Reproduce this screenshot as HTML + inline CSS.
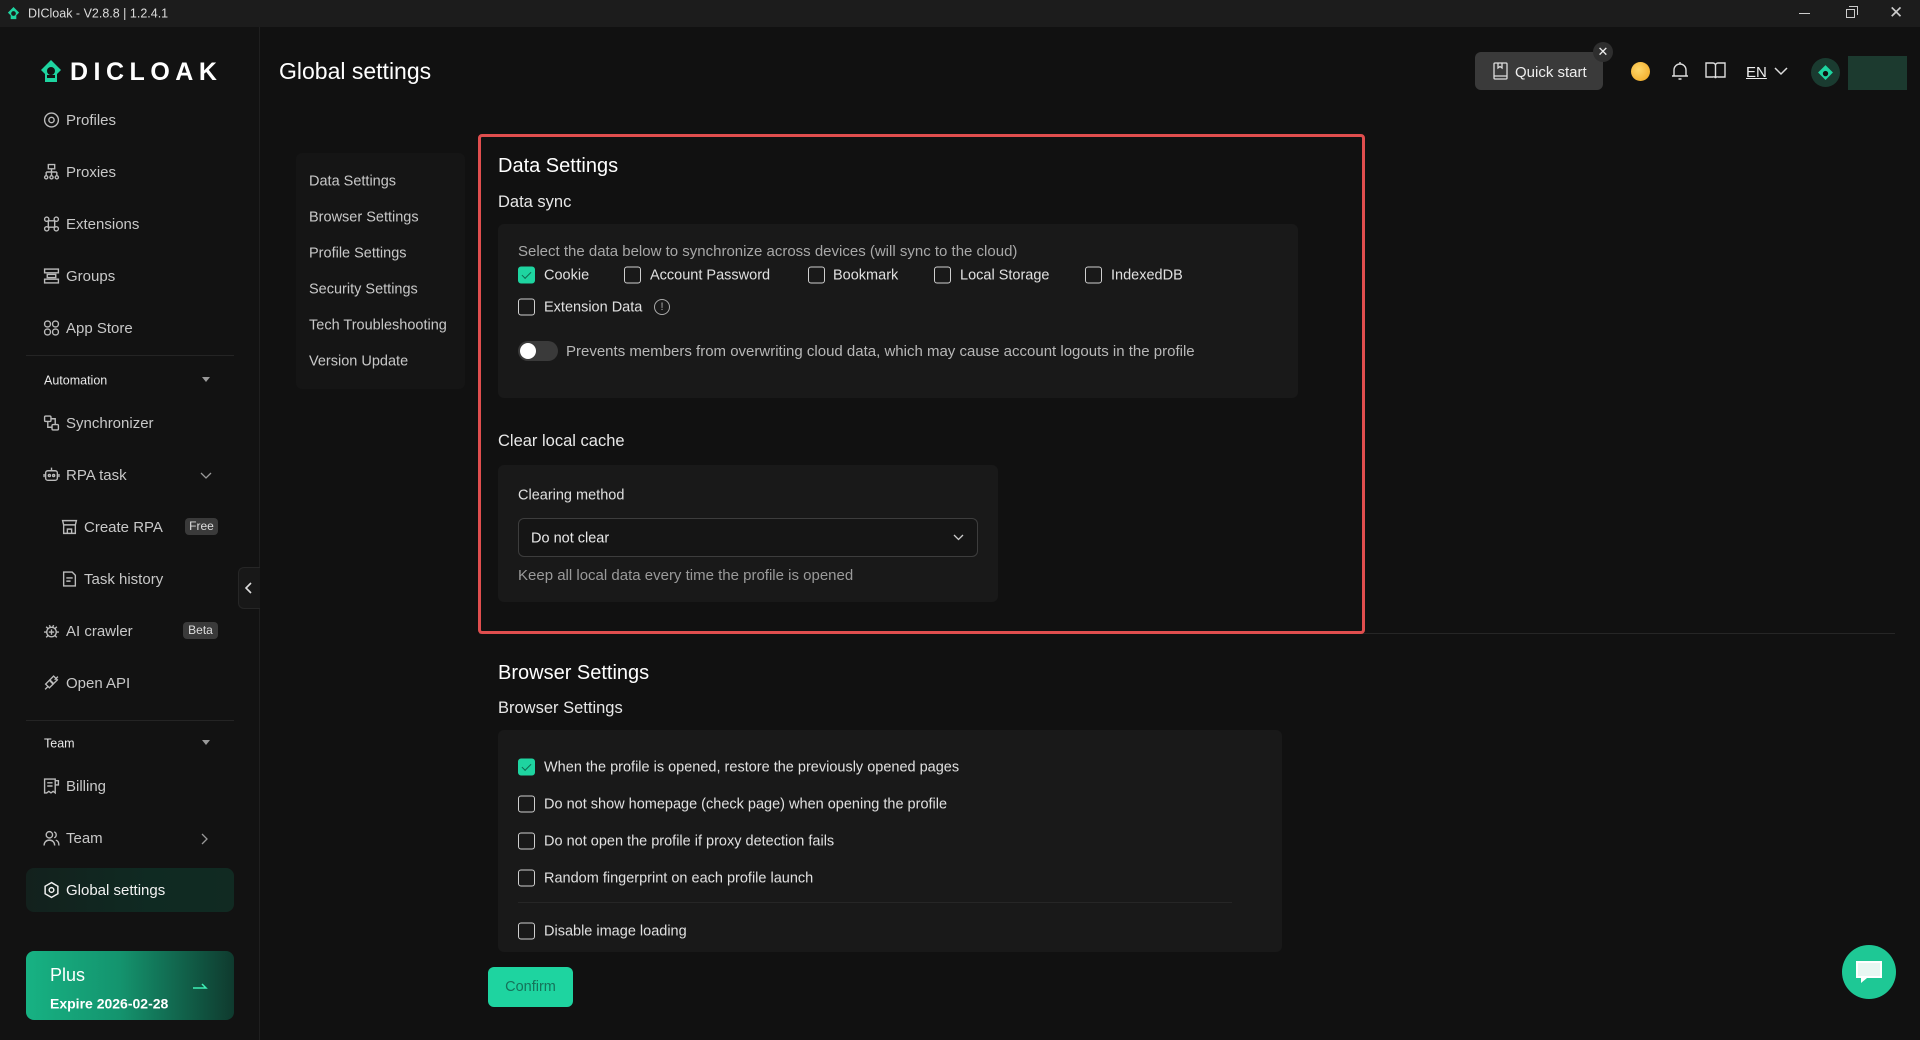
<!DOCTYPE html>
<html><head><meta charset="utf-8">
<style>
*{margin:0;padding:0;box-sizing:border-box}
body{width:1920px;height:1040px;background:#111111;font-family:"Liberation Sans",sans-serif;color:#e6e6e6;position:relative;overflow:hidden}
.a{position:absolute}
.t{position:absolute;white-space:nowrap;transform:translateY(calc(-50% + 2px));line-height:1.2}
.nav{font-size:15px;color:#c8c8c8}
.ic{position:absolute;transform:translateY(calc(-50% + 1px))}
.cb{position:absolute;width:17px;height:17px;border:1.4px solid #cfcfcf;border-radius:3px;transform:translateY(calc(-50% + 1px))}
.cb.on{background:#1ed4a0;border-color:#1ed4a0}
.cb.on:after{content:"";position:absolute;left:5px;top:2px;width:4px;height:8px;border:solid #0d6b50;border-width:0 1.5px 1.5px 0;transform:rotate(45deg)}
.lbl{font-size:14.5px;color:#e0e0e0}
.panel{position:absolute;background:#191919;border-radius:6px}
.badge{position:absolute;background:#3a3a3a;color:#ddd;font-size:12px;border-radius:4px;text-align:center;line-height:17px;height:17px}
</style></head><body>
<!-- title bar -->
<div class="a" style="left:0;top:0;width:1920px;height:27px;background:#1c1c1c"></div>
<svg class="a" style="left:6px;top:6px" width="15" height="15" viewBox="0 0 16 16"><path d="M8 1 L14 7 L11 10 L11 14 L5 14 L5 10 L2 7 Z" fill="#1ed4a0"/><circle cx="8" cy="8" r="2.5" fill="#1c1c1c"/></svg>
<div class="t" style="left:28px;top:12px;font-size:12.5px;color:#ddd">DICloak - V2.8.8 | 1.2.4.1</div>
<div class="a" style="left:1799px;top:13px;width:11px;height:1px;background:#ccc"></div>
<div class="a" style="left:1846px;top:9px;width:9px;height:9px;border:1px solid #ccc"></div>
<div class="a" style="left:1849px;top:6px;width:9px;height:9px;border-top:1px solid #ccc;border-right:1px solid #ccc"></div>
<div class="t" style="left:1889px;top:11px;font-size:17px;color:#ccc">✕</div>

<!-- sidebar -->
<div class="a" style="left:0;top:27px;width:260px;height:1013px;background:#121212;border-right:1px solid #1f1f1f"></div>
<svg class="a" style="left:39px;top:59px" width="24" height="24" viewBox="0 0 24 24"><path d="M12 1 L22 11 L18 15 L18 23 L6 23 L6 15 L2 11 Z" fill="#1ed4a0"/><circle cx="12" cy="12" r="4" fill="#121212"/><rect x="8" y="16" width="8" height="3" fill="#121212"/></svg>
<div class="t" style="left:70px;top:70px;font-size:25px;font-weight:bold;color:#fff;letter-spacing:5.5px">DICLOAK</div>

<div class="nav">
<svg class="ic" style="left:43px;top:119px" width="17" height="17" viewBox="0 0 16 16" fill="none" stroke="#bbb" stroke-width="1.3"><circle cx="8" cy="8" r="6.5"/><circle cx="8" cy="8" r="2.5"/></svg><div class="t" style="left:66px;top:119px">Profiles</div>
<svg class="ic" style="left:43px;top:171px" width="17" height="17" viewBox="0 0 16 16" fill="none" stroke="#bbb" stroke-width="1.3"><rect x="5" y="1" width="6" height="4"/><path d="M8 5v3M3 8h10M3 8v3M8 8v3M13 8v3"/><circle cx="3" cy="13" r="1.5"/><circle cx="8" cy="13" r="1.5"/><circle cx="13" cy="13" r="1.5"/></svg><div class="t" style="left:66px;top:171px">Proxies</div>
<svg class="ic" style="left:43px;top:223px" width="17" height="17" viewBox="0 0 16 16" fill="none" stroke="#bbb" stroke-width="1.3"><path d="M5 5h6v6H5z"/><circle cx="3.5" cy="3.5" r="2"/><circle cx="12.5" cy="3.5" r="2"/><circle cx="3.5" cy="12.5" r="2"/><circle cx="12.5" cy="12.5" r="2"/></svg><div class="t" style="left:66px;top:223px">Extensions</div>
<svg class="ic" style="left:43px;top:275px" width="17" height="17" viewBox="0 0 16 16" fill="none" stroke="#bbb" stroke-width="1.3"><rect x="1.5" y="1.5" width="13" height="3.5"/><rect x="4" y="6.5" width="8" height="3"/><rect x="1.5" y="11" width="13" height="3.5"/></svg><div class="t" style="left:66px;top:275px">Groups</div>
<svg class="ic" style="left:43px;top:327px" width="17" height="17" viewBox="0 0 16 16" fill="none" stroke="#bbb" stroke-width="1.3"><rect x="1.5" y="1.5" width="5.5" height="5.5" rx="2.5"/><rect x="9" y="1.5" width="5.5" height="5.5" rx="2.5"/><rect x="1.5" y="9" width="5.5" height="5.5" rx="2.5"/><rect x="9" y="9" width="5.5" height="5.5" rx="2.5"/></svg><div class="t" style="left:66px;top:327px">App Store</div>

<div class="a" style="left:26px;top:355px;width:208px;height:1px;background:#242424"></div>
<div class="t" style="left:44px;top:379px;font-size:12.5px;color:#e8e8e8">Automation</div>
<div class="a" style="left:202px;top:377px;border-left:4.5px solid transparent;border-right:4.5px solid transparent;border-top:5px solid #999"></div>

<svg class="ic" style="left:43px;top:422px" width="17" height="17" viewBox="0 0 16 16" fill="none" stroke="#bbb" stroke-width="1.3"><rect x="1.5" y="1.5" width="6" height="5" rx="1"/><rect x="8.5" y="9.5" width="6" height="5" rx="1"/><path d="M4.5 7v5h4M11.5 9V4h-4"/></svg><div class="t" style="left:66px;top:422px">Synchronizer</div>
<svg class="ic" style="left:43px;top:474px" width="17" height="17" viewBox="0 0 16 16" fill="none" stroke="#bbb" stroke-width="1.3"><rect x="2.5" y="4" width="11" height="9" rx="2"/><path d="M8 1v3M1 7v3M15 7v3"/><circle cx="6" cy="8.5" r="1"/><circle cx="10" cy="8.5" r="1"/></svg><div class="t" style="left:66px;top:474px">RPA task</div>
<svg class="a" style="left:200px;top:472px" width="12" height="8" viewBox="0 0 12 8" fill="none" stroke="#999" stroke-width="1.3"><path d="M1 1l5 5 5-5"/></svg>
<svg class="ic" style="left:61px;top:526px" width="17" height="17" viewBox="0 0 16 16" fill="none" stroke="#bbb" stroke-width="1.3"><path d="M1.5 2h13l-1 4h-11z"/><path d="M2.5 6v8h11V6M6 14v-4h4v4"/></svg><div class="t" style="left:84px;top:526px">Create RPA</div>
<div class="badge" style="left:185px;top:518px;width:33px">Free</div>
<svg class="ic" style="left:61px;top:578px" width="17" height="17" viewBox="0 0 16 16" fill="none" stroke="#bbb" stroke-width="1.3"><path d="M2.5 1.5h8l3 3v10h-11z M5 7h6M5 10h4"/></svg><div class="t" style="left:84px;top:578px">Task history</div>
<svg class="ic" style="left:43px;top:630px" width="17" height="17" viewBox="0 0 16 16" fill="none" stroke="#bbb" stroke-width="1.3"><circle cx="8" cy="9" r="4.5"/><path d="M8 6.5v5M5.5 9h5M1 9h2.5M12.5 9H15M3 4l2 2M13 4l-2 2M3 14l2-2M13 14l-2-2M6 2.5l1 2M10 2.5l-1 2"/></svg><div class="t" style="left:66px;top:630px">AI crawler</div>
<div class="badge" style="left:183px;top:622px;width:35px">Beta</div>
<svg class="ic" style="left:43px;top:682px" width="17" height="17" viewBox="0 0 16 16" fill="none" stroke="#bbb" stroke-width="1.3"><path d="M2 14l3-3M14 2l-3 3"/><rect x="3.5" y="6.5" width="5" height="5" transform="rotate(45 6 9)"/><rect x="7.5" y="2.5" width="5" height="5" transform="rotate(45 10 5)"/></svg><div class="t" style="left:66px;top:682px">Open API</div>

<div class="a" style="left:26px;top:720px;width:208px;height:1px;background:#242424"></div>
<div class="t" style="left:44px;top:742px;font-size:12.5px;color:#e8e8e8">Team</div>
<div class="a" style="left:202px;top:740px;border-left:4.5px solid transparent;border-right:4.5px solid transparent;border-top:5px solid #999"></div>

<svg class="ic" style="left:43px;top:785px" width="17" height="17" viewBox="0 0 16 16" fill="none" stroke="#bbb" stroke-width="1.3"><path d="M1.5 1.5h10v13l-2-1.5-2 1.5-2-1.5-2 1.5h-2z M11.5 3h3v4h-3 M4 5h5M4 8h5"/></svg><div class="t" style="left:66px;top:785px">Billing</div>
<svg class="ic" style="left:43px;top:837px" width="17" height="17" viewBox="0 0 16 16" fill="none" stroke="#bbb" stroke-width="1.3"><circle cx="6" cy="5" r="3"/><path d="M1 15c0-3 2-5 5-5s5 2 5 5M10.5 2.2a3 3 0 010 5.6M12 10c2 .5 3 2.5 3 5"/></svg><div class="t" style="left:66px;top:837px">Team</div>
<svg class="a" style="left:201px;top:833px" width="8" height="12" viewBox="0 0 8 12" fill="none" stroke="#999" stroke-width="1.3"><path d="M1 1l5 5-5 5"/></svg>
</div>

<div class="a" style="left:26px;top:868px;width:208px;height:44px;border-radius:8px;background:linear-gradient(90deg,#13211d,#0f2a22 60%,#112a22)"></div>
<svg class="ic" style="left:43px;top:889px" width="17" height="17" viewBox="0 0 16 16" fill="none" stroke="#eee" stroke-width="1.4"><path d="M8 1l6 3.5v7L8 15l-6-3.5v-7z"/><circle cx="8" cy="8" r="2.2"/></svg>
<div class="t" style="left:66px;top:889px;font-size:15px;color:#f2f2f2">Global settings</div>

<!-- collapse -->
<div class="a" style="left:238px;top:567px;width:22px;height:42px;background:#181818;border:1px solid #262626;border-right:none;border-radius:6px 0 0 6px"></div>
<svg class="a" style="left:245px;top:582px" width="8" height="12" viewBox="0 0 8 12" fill="none" stroke="#ddd" stroke-width="1.6"><path d="M6 1L1 6l5 5"/></svg>

<!-- plus -->
<div class="a" style="left:26px;top:951px;width:208px;height:69px;border-radius:8px;background:linear-gradient(90deg,#17b283,#14946e 45%,#0f3a2e)"></div>
<div class="t" style="left:50px;top:974px;font-size:18px;color:#fff">Plus</div>
<div class="t" style="left:50px;top:1002px;font-size:14px;color:#fff;font-weight:bold">Expire 2026-02-28</div>
<svg class="a" style="left:192px;top:981px" width="16" height="10" viewBox="0 0 16 10" fill="none" stroke="#3ef0b5" stroke-width="1.5"><path d="M1 7h13L10 3"/></svg>

<!-- header -->
<div class="t" style="left:279px;top:70px;font-size:23px;color:#fff">Global settings</div>
<div class="a" style="left:1475px;top:52px;width:128px;height:38px;border-radius:6px;background:#3a3a3a"></div>
<svg class="a" style="left:1493px;top:62px" width="15" height="18" viewBox="0 0 15 18" fill="none" stroke="#ddd" stroke-width="1.3"><rect x="1" y="1" width="13" height="16" rx="1"/><path d="M5 1v5l2-1.5L9 6V1M1 14h13"/></svg>
<div class="t" style="left:1515px;top:71px;font-size:15px;color:#eee">Quick start</div>
<div class="a" style="left:1593px;top:42px;width:20px;height:20px;border-radius:50%;background:#2e2e2e;color:#eee;font-size:13px;text-align:center;line-height:20px">✕</div>
<div class="a" style="left:1631px;top:62px;width:19px;height:19px;border-radius:50%;background:radial-gradient(circle at 40% 40%,#ffd76a,#f0a41e)"></div>
<svg class="a" style="left:1671px;top:61px" width="18" height="20" viewBox="0 0 18 20" fill="none" stroke="#ddd" stroke-width="1.4"><path d="M3 15V9a6 6 0 0112 0v6h2H1zM7.5 18h3M9 1v2"/></svg>
<svg class="a" style="left:1705px;top:62px" width="21" height="17" viewBox="0 0 21 17" fill="none" stroke="#ddd" stroke-width="1.4"><path d="M1 1h7a2.5 2.5 0 012.5 2.5V16A2 2 0 008 15H1zM20 1h-7a2.5 2.5 0 00-2.5 2.5V16A2 2 0 0113 15h7z"/></svg>
<div class="t" style="left:1746px;top:71px;font-size:15px;color:#eee;text-decoration:underline">EN</div>
<svg class="a" style="left:1774px;top:67px" width="14" height="9" viewBox="0 0 14 9" fill="none" stroke="#ddd" stroke-width="1.5"><path d="M1 1l6 6 6-6"/></svg>
<div class="a" style="left:1811px;top:58px;width:29px;height:29px;border-radius:50%;background:#1a3b30"></div>
<svg class="a" style="left:1817px;top:64px" width="17" height="17" viewBox="0 0 16 16"><path d="M8 1L15 8L8 15L1 8Z" fill="#1ed4a0"/><circle cx="8" cy="9" r="2.5" fill="#111"/></svg>
<div class="a" style="left:1848px;top:56px;width:59px;height:34px;background:#1c3a2f"></div>

<!-- secondary menu -->
<div class="a" style="left:296px;top:153px;width:169px;height:236px;background:#151515;border-radius:6px"></div>
<div style="font-size:14.5px;color:#c8c8c8">
<div class="t" style="left:309px;top:180px">Data Settings</div>
<div class="t" style="left:309px;top:216px">Browser Settings</div>
<div class="t" style="left:309px;top:252px">Profile Settings</div>
<div class="t" style="left:309px;top:288px">Security Settings</div>
<div class="t" style="left:309px;top:324px">Tech Troubleshooting</div>
<div class="t" style="left:309px;top:360px">Version Update</div>
</div>

<!-- divider -->
<div class="a" style="left:479px;top:633px;width:1416px;height:1px;background:#262626"></div>

<!-- Data Settings -->
<div class="t" style="left:498px;top:164px;font-size:20px;color:#fff">Data Settings</div>
<div class="t" style="left:498px;top:201px;font-size:16.5px;color:#e8e8e8">Data sync</div>
<div class="panel" style="left:498px;top:224px;width:800px;height:174px"></div>
<div class="t" style="left:518px;top:250px;font-size:15px;color:#a8a8a8">Select the data below to synchronize across devices (will sync to the cloud)</div>
<div class="cb on" style="left:518px;top:274px"></div><div class="t lbl" style="left:544px;top:274px">Cookie</div>
<div class="cb" style="left:624px;top:274px"></div><div class="t lbl" style="left:650px;top:274px">Account Password</div>
<div class="cb" style="left:808px;top:274px"></div><div class="t lbl" style="left:833px;top:274px">Bookmark</div>
<div class="cb" style="left:934px;top:274px"></div><div class="t lbl" style="left:960px;top:274px">Local Storage</div>
<div class="cb" style="left:1085px;top:274px"></div><div class="t lbl" style="left:1111px;top:274px">IndexedDB</div>
<div class="cb" style="left:518px;top:306px"></div><div class="t lbl" style="left:544px;top:306px">Extension Data</div>
<div class="a" style="left:654px;top:299px;width:16px;height:16px;border:1.2px solid #aaa;border-radius:50%;color:#aaa;font-size:11px;text-align:center;line-height:14px">!</div>
<div class="a" style="left:518px;top:341px;width:40px;height:20px;border-radius:10px;background:#3a3a3a"></div>
<div class="a" style="left:520px;top:343px;width:16px;height:16px;border-radius:50%;background:#fff"></div>
<div class="t" style="left:566px;top:350px;font-size:15px;color:#b8b8b8">Prevents members from overwriting cloud data, which may cause account logouts in the profile</div>

<div class="t" style="left:498px;top:440px;font-size:16.5px;color:#e8e8e8">Clear local cache</div>
<div class="panel" style="left:498px;top:465px;width:500px;height:137px"></div>
<div class="t" style="left:518px;top:494px;font-size:14.5px;color:#e0e0e0">Clearing method</div>
<div class="a" style="left:518px;top:518px;width:460px;height:39px;border:1px solid #3d3d3d;border-radius:6px;background:#151515"></div>
<div class="t" style="left:531px;top:537px;font-size:14.5px;color:#e8e8e8">Do not clear</div>
<svg class="a" style="left:953px;top:534px" width="11" height="7" viewBox="0 0 11 7" fill="none" stroke="#ccc" stroke-width="1.3"><path d="M1 1l4.5 4.5L10 1"/></svg>
<div class="t" style="left:518px;top:574px;font-size:15px;color:#9a9a9a">Keep all local data every time the profile is opened</div>

<!-- red box -->
<div class="a" style="left:478px;top:134px;width:887px;height:500px;border:3px solid #e04e4e;border-radius:4px"></div>

<!-- Browser Settings -->
<div class="t" style="left:498px;top:671px;font-size:20px;color:#fff">Browser Settings</div>
<div class="t" style="left:498px;top:707px;font-size:16.5px;color:#e8e8e8">Browser Settings</div>
<div class="panel" style="left:498px;top:730px;width:784px;height:222px"></div>
<div class="cb on" style="left:518px;top:766px"></div><div class="t lbl" style="left:544px;top:766px">When the profile is opened, restore the previously opened pages</div>
<div class="cb" style="left:518px;top:803px"></div><div class="t lbl" style="left:544px;top:803px">Do not show homepage (check page) when opening the profile</div>
<div class="cb" style="left:518px;top:840px"></div><div class="t lbl" style="left:544px;top:840px">Do not open the profile if proxy detection fails</div>
<div class="cb" style="left:518px;top:877px"></div><div class="t lbl" style="left:544px;top:877px">Random fingerprint on each profile launch</div>
<div class="a" style="left:518px;top:902px;width:714px;height:1px;background:#262626"></div>
<div class="cb" style="left:518px;top:930px"></div><div class="t lbl" style="left:544px;top:930px">Disable image loading</div>

<div class="a" style="left:488px;top:967px;width:85px;height:40px;border-radius:6px;background:#1ed4a0;color:#15735a;font-size:14.5px;text-align:center;line-height:40px">Confirm</div>

<!-- chat -->
<div class="a" style="left:1842px;top:945px;width:54px;height:54px;border-radius:50%;background:#1ec895"></div>
<svg class="a" style="left:1853px;top:958px" width="32" height="28" viewBox="0 0 32 28"><path d="M3 3h26v17H14l-6 5v-5H3z" fill="#fff"/><path d="M5 5h22v13H5z" fill="#e8f7f2"/></svg>
</body></html>
